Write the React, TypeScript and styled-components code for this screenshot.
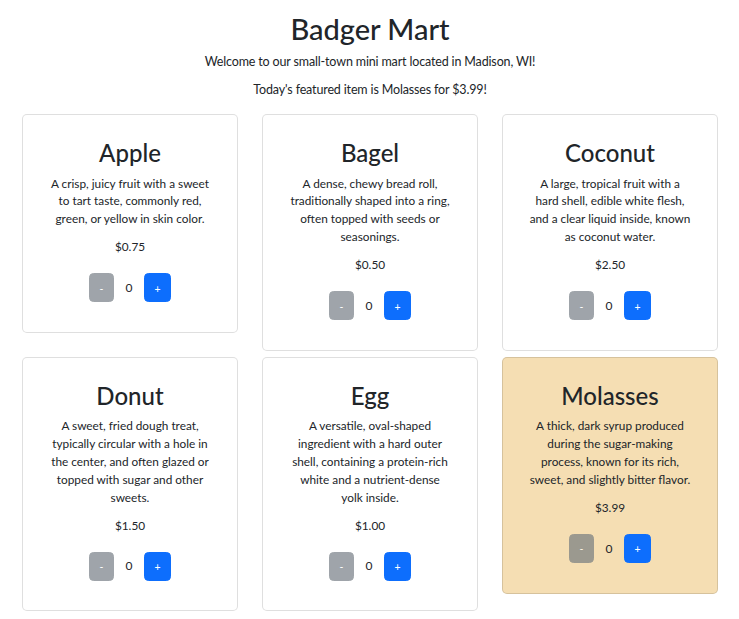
import React, { useState } from "react";
import styled, { createGlobalStyle } from "styled-components";

const GlobalStyle = createGlobalStyle`
  * { box-sizing: border-box; }
  body {
    margin: 0;
    background: #ffffff;
    color: #212529;
    font-family: Lato, "Liberation Sans", sans-serif;
  }
`;

const Page = styled.div`
  padding: 11px 21px 20px 22px;
`;

const Header = styled.header`
  text-align: center;
`;

const Title = styled.h1`
  margin: 0;
  font-size: 29px;
  line-height: 35px;
  font-weight: 500;
`;

const Lead = styled.p<{ $gap: number }>`
  margin: ${(p) => p.$gap}px 0 0;
  font-size: 12.5px;
  line-height: 20px;
  letter-spacing: -0.15px;
`;

const Grid = styled.div`
  display: grid;
  grid-template-columns: repeat(3, 1fr);
  column-gap: 24px;
  row-gap: 6px;
  align-items: start;
  margin-top: 14px;
`;

const Card = styled.div<{ $featured: boolean }>`
  background: ${(p) => (p.$featured ? "#f5deb3" : "#ffffff")};
  border: 1px solid rgba(0, 0, 0, 0.125);
  border-radius: 5px;
  padding: 23px 6px 29.5px;
  text-align: center;
`;

const CardTitle = styled.h2`
  margin: 0;
  font-size: 24px;
  line-height: 29px;
  font-weight: 500;
`;

const Description = styled.p`
  margin: 7.6px 0 0;
  font-size: 11.8px;
  line-height: 17.85px;
`;

const Line = styled.span`
  display: block;
  white-space: nowrap;
`;

const Price = styled.p`
  margin: 10px 0 0;
  font-size: 11.8px;
  line-height: 17.85px;
`;

const Controls = styled.div`
  margin-top: 17.5px;
  display: flex;
  justify-content: center;
  align-items: center;
  gap: 11.5px;
`;

const QtyButton = styled.button<{ $variant: "minus" | "plus" }>`
  height: 29px;
  padding: 2px 9.5px 0;
  border: 1px solid ${(p) => (p.$variant === "plus" ? "#0d6efd" : "#6c757d")};
  background: ${(p) => (p.$variant === "plus" ? "#0d6efd" : "#6c757d")};
  color: #ffffff;
  border-radius: 4.5px;
  font-family: Lato, "Liberation Sans", sans-serif;
  font-size: 10.5px;
  line-height: 1;
  cursor: pointer;
  &:disabled {
    opacity: 0.65;
    cursor: default;
  }
`;

const Count = styled.span`
  font-size: 12px;
  line-height: 18px;
  color: #212529;
`;

type Item = {
  name: string;
  lines: string[];
  price: number;
};

const items: Item[] = [
  {
    name: "Apple",
    lines: ["A crisp, juicy fruit with a sweet", "to tart taste, commonly red,", "green, or yellow in skin color."],
    price: 0.75,
  },
  {
    name: "Bagel",
    lines: ["A dense, chewy bread roll,", "traditionally shaped into a ring,", "often topped with seeds or", "seasonings."],
    price: 0.5,
  },
  {
    name: "Coconut",
    lines: ["A large, tropical fruit with a", "hard shell, edible white flesh,", "and a clear liquid inside, known", "as coconut water."],
    price: 2.5,
  },
  {
    name: "Donut",
    lines: [
      "A sweet, fried dough treat,",
      "typically circular with a hole in",
      "the center, and often glazed or",
      "topped with sugar and other",
      "sweets.",
    ],
    price: 1.5,
  },
  {
    name: "Egg",
    lines: [
      "A versatile, oval-shaped",
      "ingredient with a hard outer",
      "shell, containing a protein-rich",
      "white and a nutrient-dense",
      "yolk inside.",
    ],
    price: 1.0,
  },
  {
    name: "Molasses",
    lines: ["A thick, dark syrup produced", "during the sugar-making", "process, known for its rich,", "sweet, and slightly bitter flavor."],
    price: 3.99,
  },
];

const FEATURED = "Molasses";

function Product({ item }: { item: Item }) {
  const [qty, setQty] = useState(0);
  return (
    <Card $featured={item.name === FEATURED}>
      <CardTitle>{item.name}</CardTitle>
      <Description>
        {item.lines.map((l) => (
          <Line key={l}>{l}</Line>
        ))}
      </Description>
      <Price>${item.price.toFixed(2)}</Price>
      <Controls>
        <QtyButton $variant="minus" disabled={qty <= 0} onClick={() => setQty((q) => Math.max(0, q - 1))}>
          -
        </QtyButton>
        <Count>{qty}</Count>
        <QtyButton $variant="plus" onClick={() => setQty((q) => q + 1)}>
          +
        </QtyButton>
      </Controls>
    </Card>
  );
}

export default function App() {
  const featured = items.find((i) => i.name === FEATURED)!;
  return (
    <Page>
      <GlobalStyle />
      <Header>
        <Title>Badger Mart</Title>
        <Lead $gap={6}>Welcome to our small-town mini mart located in Madison, WI!</Lead>
        <Lead $gap={8}>
          Today's featured item is {featured.name} for ${featured.price.toFixed(2)}!
        </Lead>
      </Header>
      <Grid>
        {items.map((item) => (
          <Product key={item.name} item={item} />
        ))}
      </Grid>
    </Page>
  );
}
